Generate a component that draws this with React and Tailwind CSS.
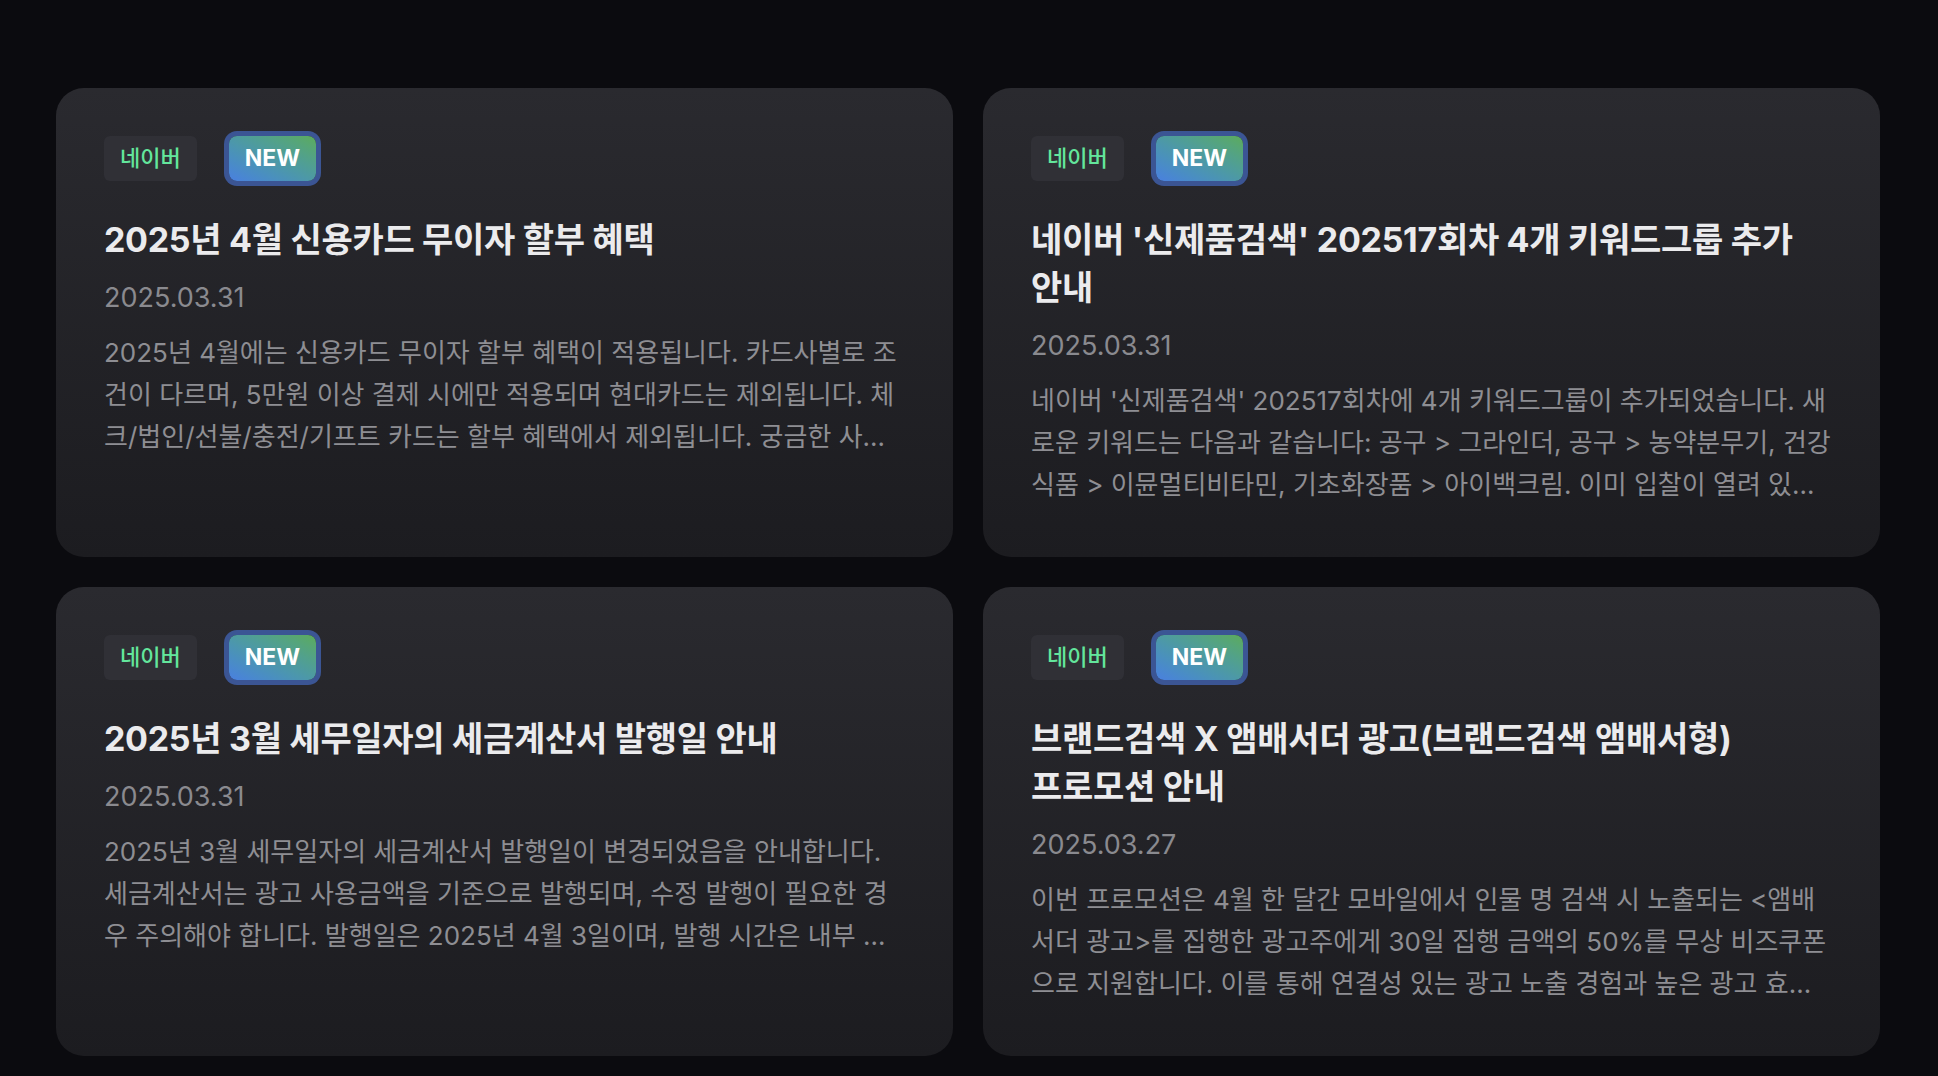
import React from 'react';

const notices = [
  {
    title: '2025년 4월 신용카드 무이자 할부 혜택',
    date: '2025.03.31',
    body: '2025년 4월에는 신용카드 무이자 할부 혜택이 적용됩니다. 카드사별로 조건이 다르며, 5만원 이상 결제 시에만 적용되며 현대카드는 제외됩니다. 체크/법인/선불/충전/기프트 카드는 할부 혜택에서 제외됩니다. 궁금한 사항은 각 카드사 고객센터로 문의해 주시기 바랍니다.',
  },
  {
    title: "네이버 '신제품검색' 202517회차 4개 키워드그룹 추가 안내",
    date: '2025.03.31',
    body: "네이버 '신제품검색' 202517회차에 4개 키워드그룹이 추가되었습니다. 새로운 키워드는 다음과 같습니다: 공구 > 그라인더, 공구 > 농약분무기, 건강식품 > 이뮨멀티비타민, 기초화장품 > 아이백크림. 이미 입찰이 열려 있으니 확인해 주시기 바랍니다.",
  },
  {
    title: '2025년 3월 세무일자의 세금계산서 발행일 안내',
    date: '2025.03.31',
    body: '2025년 3월 세무일자의 세금계산서 발행일이 변경되었음을 안내합니다. 세금계산서는 광고 사용금액을 기준으로 발행되며, 수정 발행이 필요한 경우 주의해야 합니다. 발행일은 2025년 4월 3일이며, 발행 시간은 내부 사정에 따라 변경될 수 있습니다.',
  },
  {
    title: '브랜드검색 X 앰배서더 광고(브랜드검색 앰배서형) 프로모션 안내',
    date: '2025.03.27',
    body: '이번 프로모션은 4월 한 달간 모바일에서 인물 명 검색 시 노출되는 <앰배서더 광고>를 집행한 광고주에게 30일 집행 금액의 50%를 무상 비즈쿠폰으로 지원합니다. 이를 통해 연결성 있는 광고 노출 경험과 높은 광고 효과를 기대할 수 있습니다.',
  },
];

const NoticeCard = ({ title, date, body }) => (
  <div className="rounded-[28px] bg-gradient-to-b from-[#2a2a2f] to-[#1c1c20] px-12 pt-12 pb-[51px]">
    <div className="flex items-center gap-8">
      <span className="flex h-[45px] items-center rounded-md bg-[#303036] px-4 text-[22px] font-medium text-[#63e69c]">
        네이버
      </span>
      <span className="flex h-[45px] items-center rounded-lg bg-gradient-to-tr from-[#4a7fe0] to-[#5cab5a] px-4 text-[23px] font-bold text-white ring-[5px] ring-[#3b5594]">
        NEW
      </span>
    </div>
    <h2 className="mt-[35px] break-keep text-[34px] font-bold leading-[48px] tracking-[-0.3px] text-[#ebebed]">
      {title}
    </h2>
    <p className="mt-[14px] text-[27px] leading-[40px] text-[#8a8a8f]">{date}</p>
    <p className="mt-[14px] line-clamp-3 text-[26px] leading-[42px] text-[#8e8e93]">
      {body}
    </p>
  </div>
);

export default function App() {
  return (
    <div className="min-h-screen bg-[#0b0b0f] pt-[88px] pb-6 pl-14 pr-[58px] font-[Inter,'Noto_Sans_CJK_KR',sans-serif]">
      <div className="grid grid-cols-2 gap-[30px]">
        {notices.map((n, i) => (
          <NoticeCard key={i} {...n} />
        ))}
      </div>
    </div>
  );
}
